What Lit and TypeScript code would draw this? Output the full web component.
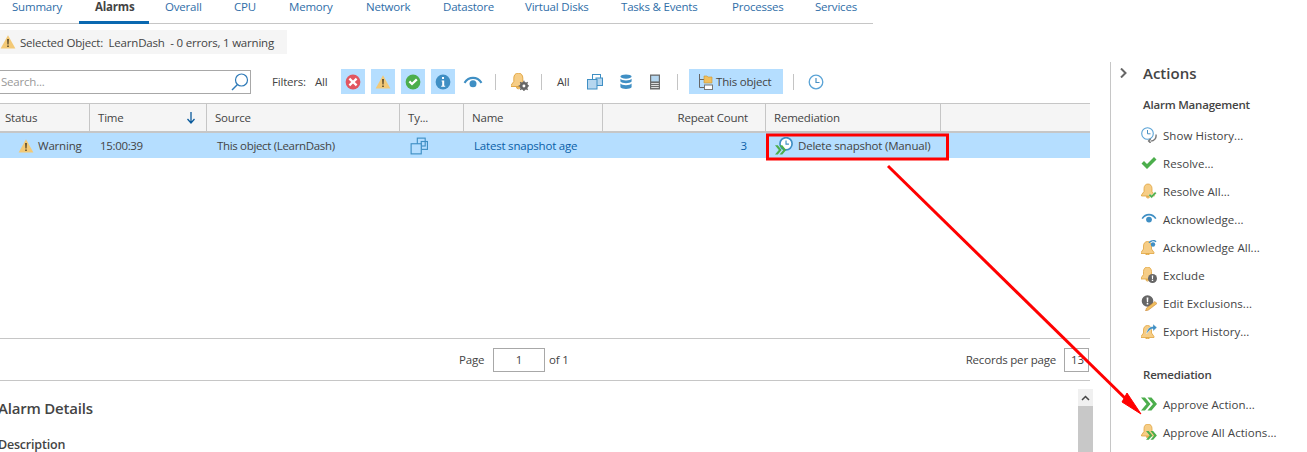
import { LitElement, html, css, svg } from "lit";
import { customElement } from "lit/decorators.js";

const bellPath = "M8 1c2.400 0 4 1.900 4 4.500v3l2.500 3.500v1h-13v-1L4 8.500v-3C4 2.900 5.600 1 8 1zM6.400 13.500h3.200a1.600 1.600 0 0 1-3.200 0z";
const bell = (o = "") => svg`<path d=${bellPath} fill="#f6cd86" stroke="#e0a33c" stroke-width=".8" transform=${o}/>`;
const chevrons = (c = "#4cae4c") => svg`<path d="M0 1.500 5.500 8 0 14.500h4L9.500 8 4 1.500zM6.500 1.500 12 8l-5.500 6.500h4L16 8l-5.500-6.500z" fill=${c}/>`;
const box = (body: unknown, w = 16, h = 16) => html`<svg width=${w} height=${h} viewBox="0 0 16 16">${body}</svg>`;

const icons: Record<string, () => unknown> = {
  warn: () => box(svg`<path d="M8 1.200 15.400 14.600H.6z" fill="#f3c976"/><path d="M7.100 5h1.800l-.3 5.600H7.400zM7.200 11.400h1.600V13H7.200z" fill="#5a4a2a"/>`),
  error: () => box(svg`<circle cx="8" cy="8" r="7.400" fill="#e25660"/><path d="M5.200 3.800 8 6.400l2.800-2.600 1.600 1.600L9.800 8l2.600 2.600-1.600 1.600L8 9.600l-2.800 2.600-1.600-1.600L6.200 8 3.600 5.400z" fill="#fff"/>`),
  ok: () => box(svg`<circle cx="8" cy="8" r="7.400" fill="#4cae4c"/><path d="M3.600 8.200 5.200 6.600 7 8.400l4-3.800 1.600 1.600L7 11.600z" fill="#fff"/>`),
  info: () => box(svg`<circle cx="8" cy="8" r="7.400" fill="#3f8fc4"/><path d="M7 3h2v2H7zM6.600 6.400h2.600v5.400h1v1H6.200v-1h1V7.400h-.6z" fill="#fff"/>`),
  eye: () => box(svg`<path d="M.5 8.200C2.400 5.200 5 3.800 8 3.800s5.600 1.400 7.500 4.400l-1.400.9C12.600 6.800 10.500 5.600 8 5.600S3.400 6.800 1.900 9.100z" fill="#3f8fc4"/><circle cx="8" cy="9.400" r="2.800" fill="#3f8fc4"/>`, 20, 20),
  bellgear: () => box(svg`${bell("translate(-1.500 -1)")}<path d="M11.500 6.800v9.400M6.800 11.500h9.400M8.200 8.200l6.600 6.600M14.800 8.200l-6.600 6.600" stroke="#666" stroke-width="1.200"/><circle cx="11.500" cy="11.500" r="3.600" fill="#666"/><circle cx="11.500" cy="11.500" r="1.300" fill="#fff"/>`, 18, 18),
  multi: () => box(svg`<rect x="5.500" y=".5" width="8" height="8" fill="#fff" stroke="#3f8fc4"/><rect x="9" y="4" width="6.500" height="7.500" fill="#b5d6ef" stroke="#3f8fc4"/><rect x=".5" y="5.500" width="9.500" height="9.500" fill="#b5d6ef" stroke="#3f8fc4"/>`),
  multiOutline: () => box(svg`<rect x="6.500" y="1" width="7" height="7" fill="none" stroke="#3f8fc4"/><rect x="10" y="4" width="5.500" height="7" fill="none" stroke="#3f8fc4"/><rect x="1" y="6" width="9" height="9" fill="#b5deff" stroke="#3f8fc4"/>`, 18, 18),
  db: () => box(svg`<g fill="#3f8fc4"><ellipse cx="8" cy="2.600" rx="5.600" ry="2.100"/><path d="M2.400 4.800c1 1.200 2.900 1.700 5.600 1.700s4.600-.5 5.600-1.700v2.700c-1 1.200-2.900 1.700-5.600 1.700S3.400 8.700 2.400 7.500zM2.400 9.600c1 1.200 2.900 1.700 5.600 1.700s4.600-.5 5.600-1.700v3.600c-1 1.200-2.900 1.700-5.600 1.700s-4.600-.5-5.600-1.700z"/></g>`),
  server: () => box(svg`<rect x="3" y=".5" width="10" height="15" fill="#6b6b6b"/><rect x="4.200" y="1.800" width="7.600" height="5.600" fill="#b5d6ef"/><path d="M4.200 9h7.600v1H4.200zM4.200 11h7.600v1H4.200zM4.200 13h7.600v1H4.200z" fill="#ddd"/>`),
  tree: () => box(svg`<path d="M2.500 0v13.500H7M2.500 5.500H7" fill="none" stroke="#666"/><path d="M7 2h3l1 1h4v6H7z" fill="#f0bf5e" stroke="#c9942f" stroke-width=".6"/><rect x="7.500" y="11" width="8" height="4.500" fill="#fff" stroke="#777"/>`),
  clock: () => box(svg`<circle cx="8" cy="8" r="6.800" fill="none" stroke="#5aa3d6" stroke-width="1.300"/><path d="M8 4v4.500h3.500" fill="none" stroke="#4a90c2" stroke-width="1.200"/>`),
  remed: () => box(svg`<circle cx="9.800" cy="6" r="5.400" fill="#fff" stroke="#3f8fc4" stroke-width="1.500"/><path d="M9.800 3v3.300h2.600" fill="none" stroke="#3f8fc4"/><g transform="translate(0 6.500) scale(.62)">${chevrons()}</g>`, 18, 18),
  history: () => box(svg`<circle cx="6.500" cy="6.500" r="5.800" fill="none" stroke="#5aa3d6" stroke-width="1.100"/><path d="M6.500 3v3.800h3" fill="none" stroke="#4a90c2"/><path d="M15 7.500c.6 3.500-1.600 6.600-5.400 6.600M9.600 11.800 7.600 14l2 2" fill="none" stroke="#777" stroke-width="1.400"/>`),
  check: () => box(svg`<path d="M.5 8.500 3 6l3 3 7-7 2.500 2.500L6 14z" fill="#4cae4c"/>`),
  bellcheck: () => box(svg`${bell("translate(-1 0)")}<path d="M7.500 12.300 9 10.800l1.600 1.500 3.500-3.500 1.400 1.400-4.900 5z" fill="#4cae4c" stroke="#fff" stroke-width=".4"/>`),
  ack: () => box(svg`<path d="M.5 7.200C2.400 4.200 5 2.800 8 2.800s5.600 1.400 7.500 4.400l-1.400.9C12.600 5.800 10.500 4.600 8 4.600S3.400 5.800 1.900 8.100z" fill="#3f8fc4"/><circle cx="8" cy="8.600" r="2.900" fill="#3f8fc4"/>`),
  bellack: () => box(svg`${bell("translate(-1.500 1.500)")}<path d="M7.500 3.300C9 1.700 10.800 1 12.300 1s2.300.4 3.200 1.200l-.8 1C13.800 2.500 13 2.300 12.300 2.300s-2.300.5-3.800 2z" fill="#3f8fc4"/><circle cx="12" cy="5.500" r="2.200" fill="#3f8fc4"/>`),
  exclude: () => box(svg`${bell("translate(-1.500 -1)")}<circle cx="11.500" cy="11.500" r="4.500" fill="#666"/><path d="M10.800 8.600h1.400l-.2 3.400h-1zM10.800 12.800h1.400v1.300h-1.400z" fill="#fff"/>`),
  edit: () => box(svg`<circle cx="6.500" cy="6" r="5.800" fill="#666"/><path d="M5.600 2.600h1.800l-.3 4.600H5.900zM5.700 8h1.600v1.600H5.700z" fill="#fff"/><path d="M14 6.500 16 8.500 7.500 15l-3 1 1-3z" fill="#f0bf5e" stroke="#c0762a" stroke-width=".5"/>`),
  exportH: () => box(svg`${bell("translate(-1.500 1.500)")}<path d="M5.500 11C5.800 6.500 8.500 3.500 12 3.500V1l4 3.600-4 3.600V5.800C9.500 6 7.500 8 5.500 11z" fill="#3f8fc4" stroke="#fff" stroke-width=".4"/>`),
  approve: () => box(chevrons()),
  approveAll: () => box(svg`${bell("translate(-1 -1)")}<g transform="translate(5 6) scale(.68)">${chevrons()}</g>`),
};

const tabs = ["Summary", "Alarms", "Overall", "CPU", "Memory", "Network", "Datastore", "Virtual Disks", "Tasks & Events", "Processes", "Services"];
const alarmActions: [string, string][] = [
  ["history", "Show History..."], ["check", "Resolve..."], ["bellcheck", "Resolve All..."], ["ack", "Acknowledge..."],
  ["bellack", "Acknowledge All..."], ["exclude", "Exclude"], ["edit", "Edit Exclusions..."], ["exportH", "Export History..."],
];
const remActions: [string, string][] = [["approve", "Approve Action..."], ["approveAll", "Approve All Actions..."]];

@customElement("app-root")
export class AppRoot extends LitElement {
  static styles = css`
    :host { display: block; position: relative; width: 1307px; height: 452px; overflow: hidden; background: #fff;
      font-family: "Open Sans", "Noto Sans", sans-serif; font-size: 11.5px; letter-spacing: -0.2px; color: #444; }
    svg { display: block; flex: none; }
    .page { display: flex; height: 452px; }
    .main { width: 1110px; flex: none; display: flex; flex-direction: column; }
    .tabs { width: 873px; height: 24px; box-sizing: border-box; border-bottom: 1px solid #c6c6c6; display: grid;
      grid-template-columns: 79px 70px 69px 55px 77px 77px 82px 96px 111px 83px 74px; }
    .tab { padding-left: 16px; line-height: 13px; color: #2f6ea8; white-space: nowrap; height: 24px; box-sizing: border-box; }
    .tab:first-child { padding-left: 12px; }
    .tab.on { color: #444; font-weight: 700; border-bottom: 3px solid #0a68b0; }
    .banner { margin-top: 6px; width: 287px; height: 24px; background: #f5f5f5; display: flex; align-items: center; gap: 4px; white-space: nowrap; }
    .toolbar { margin-top: 15px; height: 25px; display: flex; align-items: center; white-space: nowrap; }
    .search { width: 251px; height: 24px; box-sizing: border-box; border: 1px solid #a8a8a8; border-left: 0; display: flex; align-items: center;
      justify-content: space-between; padding: 0 0 0 1px; color: #999; }
    .label-f { margin-left: 21px; width: 43px; }
    .label-all { width: 26px; }
    .tb { width: 24px; height: 25px; background: #b5deff; display: flex; align-items: center; justify-content: center; margin-right: 6px; }
    .sep { width: 1px; height: 16px; background: #c4c4c4; }
    .eye { margin: 0 12px 0 2px; }
    .s1 { margin-right: 15px; }
    .bg { margin-right: 12px; }
    .s2 { margin-right: 15px; }
    .all2 { width: 30px; }
    .multi { margin-right: 15px; }
    .dbi { margin-right: 13px; }
    .srv { margin-right: 14px; }
    .s3 { margin-right: 11px; }
    .obj { width: 94px; height: 25px; background: #b5deff; display: flex; align-items: center; gap: 3px; padding-left: 8px; box-sizing: border-box; margin-right: 10px; }
    .clk { margin-left: 14px; }
    .table { margin-top: 9px; width: 1090px; height: 236px; box-sizing: border-box; border-bottom: 1px solid #c6c6c6; }
    .cols { display: grid; grid-template-columns: 90px 117px 193px 64px 139px 163px 175px 1fr; }
    .head { height: 30px; box-sizing: border-box; background: #f5f5f5; border-top: 1px solid #c6c6c6; border-bottom: 2px solid #c6c6c6; }
    .hc { border-right: 1px solid #c6c6c6; padding-left: 8px; display: flex; align-items: center; justify-content: space-between; white-space: nowrap; box-sizing: border-box; }
    .hc:first-child { padding-left: 5px; }
    .hc:last-child { border-right: 0; }
    .hc.right { justify-content: flex-end; padding-right: 17px; }
    .hc svg { margin-right: 10px; }
    .row { height: 25px; background: #b5deff; }
    .rc { display: flex; align-items: center; padding-left: 10px; white-space: nowrap; gap: 6px; box-sizing: border-box; }
    .rc.tight { letter-spacing: -0.33px; }
    .rc.st { padding-left: 18px; gap: 4px; }
    .rc.nm { color: #0a5fa8; }
    .rc.num { justify-content: flex-end; padding-right: 19px; color: #0a5fa8; }
    .rc.rem { padding-left: 9px; gap: 5px; }
    .pager { width: 1090px; height: 42px; box-sizing: border-box; border-bottom: 1px solid #c6c6c6; display: flex; align-items: center; padding-left: 459px; }
    .pg { display: flex; align-items: center; gap: 4px; }
    .pg-l { width: 30px; }
    .inp { width: 52px; height: 24px; box-sizing: border-box; border: 1px solid #a8a8a8; text-align: center; line-height: 22px; }
    .rec { margin-left: auto; display: flex; align-items: center; gap: 8px; }
    .inp.s { width: 25px; text-align: left; padding-left: 6px; margin-right: 1px; overflow: hidden; }
    .details { display: flex; width: 1093px; flex: 1; min-height: 0; }
    .dtext { flex: 1; margin-left: -2px; }
    .dtitle { font-size: 15px; margin-top: 17px; line-height: 20px; color: #444; font-weight: 600; }
    .dsub { font-size: 12.5px; margin-top: 18px; line-height: 18px; font-weight: 600; }
    .sb { width: 15px; margin-top: 8px; background: #c8c8c8; }
    .sbb { height: 17px; background: #f0f0f0; display: flex; align-items: center; justify-content: center; }
    .side { flex: 1; margin-top: 62px; border-left: 1px solid #c6c6c6; box-sizing: border-box; }
    .shead { display: flex; align-items: center; height: 22px; }
    .shead svg { margin-left: 9px; }
    .stitle { margin-left: 16px; font-size: 15px; font-weight: 600; color: #444; letter-spacing: 0; }
    .sgroup { margin: 11px 0 0 32px; height: 20px; line-height: 20px; font-weight: 600; }
    .sgroup.r { margin-top: 20px; }
    .items { margin: 6px 0 0 30px; display: flex; flex-direction: column; letter-spacing: 0.05px; }
    .items.r2 { margin-top: 5px; }
    .item { height: 28px; display: flex; align-items: center; gap: 6px; white-space: nowrap; }
    .overlay { position: absolute; left: 0; top: 0; pointer-events: none; }
  `;

  render() {
    return html`<div class="page">
      <div class="main">
        <div class="tabs">${tabs.map((t) => html`<div class="tab ${t === "Alarms" ? "on" : ""}">${t}</div>`)}</div>
        <div class="banner">${icons.warn()}<span>Selected Object:&nbsp; LearnDash &nbsp;- 0 errors, 1 warning</span></div>
        <div class="toolbar">
          <div class="search"><span>Search...</span>
            <svg width="20" height="20" viewBox="0 0 20 20"><circle cx="11.500" cy="8" r="6" fill="none" stroke="#2f7ab8" stroke-width="1.200"/><path d="M7.500 12.500 2 18" stroke="#2f7ab8" stroke-width="1.400"/></svg></div>
          <span class="label-f">Filters:</span><span class="label-all">All</span>
          <div class="tb">${icons.error()}</div><div class="tb">${icons.warn()}</div><div class="tb">${icons.ok()}</div><div class="tb">${icons.info()}</div>
          <div class="eye">${icons.eye()}</div>
          <div class="sep s1"></div>
          <div class="bg">${icons.bellgear()}</div>
          <div class="sep s2"></div>
          <span class="all2">All</span>
          <div class="multi">${icons.multi()}</div><div class="dbi">${icons.db()}</div><div class="srv">${icons.server()}</div>
          <div class="sep s3"></div>
          <div class="obj">${icons.tree()}<span>This object</span></div>
          <div class="sep"></div>
          <div class="clk">${icons.clock()}</div>
        </div>
        <div class="table">
          <div class="cols head">
            <div class="hc">Status</div>
            <div class="hc">Time<svg width="10" height="12" viewBox="0 0 10 12"><path d="M5 0v10M1.500 7 5 11l3.500-4" fill="none" stroke="#0a5a9c" stroke-width="1.300"/></svg></div>
            <div class="hc">Source</div><div class="hc">Ty...</div><div class="hc">Name</div>
            <div class="hc right">Repeat Count</div><div class="hc">Remediation</div><div class="hc"></div>
          </div>
          <div class="cols row">
            <div class="rc st">${icons.warn()}<span>Warning</span></div>
            <div class="rc tight">15:00:39</div>
            <div class="rc tight">This object (LearnDash)</div>
            <div class="rc">${icons.multiOutline()}</div>
            <div class="rc nm">Latest snapshot age</div>
            <div class="rc num">3</div>
            <div class="rc rem">${icons.remed()}<span>Delete snapshot (Manual)</span></div>
            <div></div>
          </div>
        </div>
        <div class="pager">
          <div class="pg"><span class="pg-l">Page</span><div class="inp">1</div><span>of 1</span></div>
          <div class="rec"><span>Records per page</span><div class="inp s">13</div></div>
        </div>
        <div class="details">
          <div class="dtext"><div class="dtitle">Alarm Details</div><div class="dsub">Description</div></div>
          <div class="sb"><div class="sbb"><svg width="9" height="6" viewBox="0 0 9 6"><path d="M1 5l3.500-3.500L8 5" fill="none" stroke="#444" stroke-width="1.500"/></svg></div></div>
        </div>
      </div>
      <div class="side">
        <div class="shead">
          <svg width="7" height="10" viewBox="0 0 7 10"><path d="M1 .5 5.500 5 1 9.500" fill="none" stroke="#666" stroke-width="2"/></svg>
          <span class="stitle">Actions</span>
        </div>
        <div class="sgroup">Alarm Management</div>
        <div class="items">${alarmActions.map(([i, t]) => html`<div class="item">${icons[i]()}<span>${t}</span></div>`)}</div>
        <div class="sgroup r">Remediation</div>
        <div class="items r2">${remActions.map(([i, t]) => html`<div class="item">${icons[i]()}<span>${t}</span></div>`)}</div>
      </div>
    </div>
    <svg class="overlay" width="1307" height="452" viewBox="0 0 1307 452">
      <rect x="767.500" y="135" width="180" height="24" fill="none" stroke="#f00" stroke-width="3"/>
      <path d="M888 166 1130 403" stroke="#f00" stroke-width="3" fill="none"/>
      <path d="M1127 393 1122 402 1141 414 z" fill="#f00" stroke="#f00" stroke-width="1"/>
    </svg>`;
  }
}
